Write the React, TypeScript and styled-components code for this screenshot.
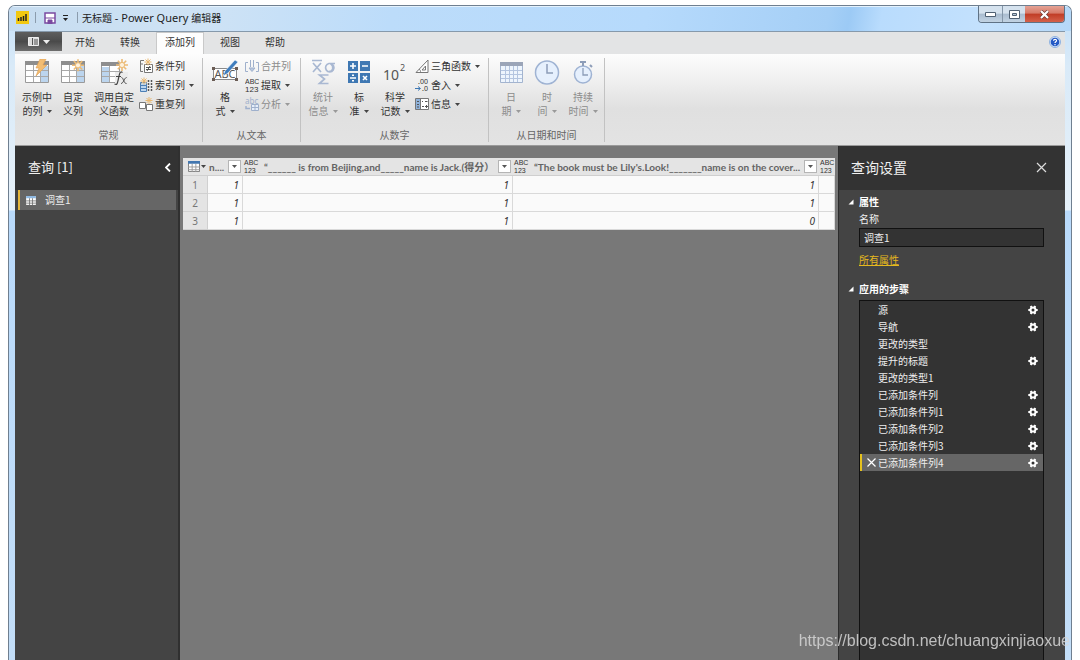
import React from "react";
import styled, { createGlobalStyle, css } from "styled-components";

const ui = `"Noto Sans", "Noto Sans CJK SC", sans-serif`;
const cjk = `"Noto Sans CJK SC", "Noto Sans", sans-serif`;

const Global = createGlobalStyle`
  * { box-sizing: border-box; }
  html, body { margin: 0; height: 100%; background: #fff; overflow: hidden; }
  body { font-family: ${cjk}; font-size: 10px; line-height: 14px; color: #333; }
  button { font: inherit; color: inherit; background: none; border: 0; padding: 0; margin: 0; }
  h2, h3, ul, ol { margin: 0; padding: 0; list-style: none; font-weight: 400; }
  svg { display: block; flex: none; }
`;

const Page = styled.div`
  height: 100vh;
  padding: 5px 8px 0 8px;
`;

const Shell = styled.div`
  height: 100%;
  display: flex;
  flex-direction: column;
  padding: 0 6px;
  border: 1px solid #6f7f90;
  border-bottom: 0;
  border-radius: 7px 7px 0 0;
  overflow: hidden;
  background: linear-gradient(180deg, #c4dff8 0, #d9eaf8 60px, #e6f1fa 204px, #b9dafb 205px, #c3def8 100%);
`;

const TitleBar = styled.header`
  display: flex;
  align-items: flex-start;
  justify-content: space-between;
  height: 25px;
  flex: none;
  margin: 0 -6px;
  padding: 0 6px 0 7px;
  box-shadow: inset 0 1px 0 #e4f2fd;
  background: linear-gradient(100deg, #c6dcf0 0%, #cfe3f5 18%, #bcdcfa 36%, #b6dafc 60%, #a5cff6 77%, #9ccaf5 79%, #b9dcfd 82%, #c4e1fd 92%, #b5d8f8 100%);
`;

const TitleLeft = styled.div`
  display: flex;
  align-items: center;
  height: 23px;
  color: #222;
`;

const Divider = styled.span`
  width: 1px;
  height: 11px;
  background: #8b9cad;
  margin: 0 8px 0 6px;
`;

const TitleText = styled.h1`
  margin: 0 0 0 -4px;
  font-size: 10px;
  font-weight: 400;
  line-height: 16px;
  white-space: pre;
`;

const AppName = styled.span`
  font-family: ${ui};
  font-size: 11px;
`;

const QuickButton = styled.button<{ $last?: boolean }>`
  display: flex;
  margin-right: ${(p) => (p.$last ? 3 : 7)}px;
`;

const WinButtons = styled.div`
  display: flex;
  height: 17px;
  border: 1px solid #5f7285;
  border-top: 0;
  border-radius: 0 0 4px 4px;
  overflow: hidden;
`;

const WinButton = styled.button<{ $close?: boolean }>`
  display: flex;
  align-items: center;
  justify-content: center;
  width: ${(p) => (p.$close ? 39 : 23)}px;
  border-left: ${(p) => (p.$close ? 0 : 1)}px solid #8496a8;
  background: linear-gradient(180deg, #d5e2ee 0 45%, #a9bccf 50%, #c2d3e3 100%);
  &:first-child { border-left: 0; }
  ${(p) =>
    p.$close &&
    css`
      background: linear-gradient(180deg, #e5a295 0, #d67a68 45%, #c03c25 50%, #d4614a 100%);
    `}
`;

const TabBar = styled.nav`
  display: flex;
  align-items: flex-start;
  gap: 1px;
  height: 23px;
  background: #e3e4e5;
  border-top: 1px solid #8699ab;
  flex: none;
`;

const FileButton = styled.button`
  display: flex;
  align-items: center;
  justify-content: center;
  gap: 4px;
  width: 47px;
  height: 19px;
  background: linear-gradient(180deg, #5e5e5e 0, #4a4a4a 50%, #6d6d6d 100%);
`;

const Tab = styled.button<{ $active?: boolean }>`
  height: 22px;
  padding: 0 12px 2px;
  color: #333;
  ${(p) =>
    p.$active &&
    css`
      margin: 0 3px;
      padding: 0 8px 3px;
      background: #fdfdfd;
      border: 1px solid #c9c9c9;
      border-bottom: 0;
    `}
`;

const HelpButton = styled.button`
  margin: 4px 4px 0 auto;
`;

const Ribbon = styled.section`
  display: flex;
  flex: none;
  height: 92px;
  padding: 4px 0 3px;
  background: linear-gradient(180deg, #fdfdfd 0, #f0f0f0 28%, #e0e0e0 60%, #e3e3e3 100%);
  border-bottom: 1px solid #9a9a9a;
`;

const Group = styled.div<{ $w: number }>`
  display: flex;
  flex-direction: column;
  justify-content: space-between;
  width: ${(p) => p.$w}px;
  flex: none;
  border-right: 1px solid #c2c2c2;
`;

const GroupBody = styled.div`
  display: flex;
  align-items: flex-start;
  padding-left: 4px;
`;

const GroupLabel = styled.div`
  text-align: center;
  color: #666;
`;

const BigButton = styled.button<{ $w?: number; $off?: boolean }>`
  display: flex;
  flex-direction: column;
  align-items: center;
  width: ${(p) => p.$w ?? 36}px;
  padding-top: 1px;
  white-space: nowrap;
  color: ${(p) => (p.$off ? "#8c8c8c" : "#333")};
`;

const BigIcon = styled.span`
  display: flex;
  align-items: center;
  justify-content: center;
  height: 27px;
  margin-bottom: 4px;
`;

const Line = styled.span`
  display: flex;
  align-items: center;
  gap: 4px;
`;

const SmallCol = styled.div`
  display: flex;
  flex-direction: column;
  margin-left: 2px;
  gap: 3px;
`;

const SmallButton = styled.button<{ $off?: boolean }>`
  display: flex;
  align-items: center;
  gap: 2px;
  height: 16px;
  white-space: nowrap;
  color: ${(p) => (p.$off ? "#8c8c8c" : "#333")};
`;

const Main = styled.main`
  display: flex;
  flex: 1;
  min-height: 0;
  background: #787878;
`;

const QueryPane = styled.aside`
  width: 165px;
  flex: none;
  background: #444;
  border-right: 2px solid #303030;
  color: #eee;
`;

const PaneHeader = styled.div<{ $right?: boolean }>`
  display: flex;
  align-items: center;
  justify-content: space-between;
  height: 44px;
  background: #333;
  color: #f0f0f0;
  padding: ${(p) => (p.$right ? "0 18px 2px 12px" : "0 7px 2px 13px")};
`;

const PaneTitle = styled.h2<{ $size: number }>`
  font-size: ${(p) => p.$size}px;
  line-height: 20px;
`;

const QueryItem = styled.button`
  display: flex;
  align-items: center;
  gap: 9px;
  width: 158px;
  height: 20px;
  margin: 0 0 0 3px;
  padding-left: 6px;
  background: #666;
  border-left: 2px solid #e6b73a;
`;

const Canvas = styled.section`
  flex: 1;
  min-width: 0;
  padding: 12px 3px 0 3px;
  overflow: hidden;
`;

const Table = styled.table`
  width: 100%;
  table-layout: fixed;
  border-collapse: separate;
  border-spacing: 0;
  background: #fafafa;
  font-family: Lato, "Noto Sans CJK SC", sans-serif;
`;

const Col = styled.col<{ $w?: number }>`
  width: ${(p) => (p.$w ? `${p.$w}px` : "auto")};
`;

const Th = styled.th`
  height: 18px;
  padding: 0;
  background: #e4e4e4;
  border-bottom: 1px solid #cfcfcf;
  font-size: 10px;
  color: #636363;
  text-align: left;
`;

const HeadCell = styled.div`
  display: flex;
  align-items: center;
  height: 17px;
  padding: 0 2px 0 1px;
  white-space: pre;
  overflow: hidden;
`;

const HeadText = styled.span`
  flex: 1;
  min-width: 0;
`;

const TableMenu = styled.button`
  display: flex;
  align-items: center;
  gap: 1px;
  padding-left: 4px;
`;

const TypeBadge = styled.span`
  display: flex;
  flex-direction: column;
  flex: none;
  width: 20px;
  font-family: "Liberation Sans", sans-serif;
  font-size: 7px;
  line-height: 8px;
  font-weight: 400;
  color: #333;
`;

const FilterButton = styled.button`
  display: flex;
  align-items: center;
  justify-content: center;
  flex: none;
  width: 13px;
  height: 13px;
  background: #fff;
  border: 1px solid #b5b5b5;
`;

const RowHead = styled.th`
  height: 18px;
  padding: 0;
  background: #e4e4e4;
  border-right: 1px solid #d0d0d0;
  border-bottom: 1px solid #d0d0d0;
  font-family: "Noto Sans", sans-serif;
  font-size: 10px;
  font-weight: 400;
  color: #777;
`;

const Td = styled.td`
  height: 18px;
  padding: 0 3px 0 0;
  border-right: 1px solid #d9d9d9;
  border-bottom: 1px solid #d9d9d9;
  font-family: "Noto Sans", sans-serif;
  font-size: 10px;
  line-height: 14px;
  font-style: italic;
  text-align: right;
  color: #333;
`;

const Settings = styled.aside`
  display: flex;
  flex-direction: column;
  width: 227px;
  flex: none;
  background: #444;
  border-left: 1px solid #2c2c2c;
  color: #eee;
`;

const SettingsBody = styled.div`
  display: flex;
  flex-direction: column;
  flex: 1;
  min-height: 0;
  padding: 4px 21px 0 20px;
`;

const SectionTitle = styled.h3`
  display: flex;
  align-items: center;
  gap: 5px;
  margin-left: -11px;
  font-size: 10px;
  font-weight: 700;
  line-height: 16px;
  color: #fff;
`;

const FieldLabel = styled.label`
  line-height: 18px;
`;

const NameInput = styled.input`
  width: 100%;
  height: 19px;
  padding: 0 4px;
  background: #333;
  border: 1px solid #111;
  border-radius: 0;
  outline: 0;
  color: #eee;
  font: inherit;
`;

const AllLink = styled.a`
  align-self: flex-start;
  margin: 6px 0 14px;
  color: #e6b91e;
  line-height: 14px;
`;

const StepList = styled.ol`
  flex: 1;
  margin-top: 3px;
  background: #333;
  border: 1px solid #111;
  border-bottom: 0;
`;

const Step = styled.li<{ $sel?: boolean }>`
  display: flex;
  align-items: center;
  height: 17px;
  padding: 0 5px 0 2px;
  border-left: 2px solid ${(p) => (p.$sel ? "#e6c21e" : "transparent")};
  background: ${(p) => (p.$sel ? "#666" : "transparent")};
`;

const StepMark = styled.button`
  display: flex;
  justify-content: center;
  width: 14px;
`;

const StepName = styled.button`
  flex: 1;
  text-align: left;
`;

const Watermark = styled.div`
  position: fixed;
  right: 10px;
  bottom: 10px;
  font: 16px/18px "Liberation Sans", sans-serif;
  color: rgba(215, 215, 215, 0.85);
`;

const Caret = ({ color = "#444" }: { color?: string }) => (
  <svg width="5" height="3" viewBox="0 0 5 3">
    <path d="M0 0h5L2.5 3z" fill={color} />
  </svg>
);

const Spark = ({ x, y }: { x: number; y: number }) => (
  <g transform={`translate(${x} ${y})`} stroke="#ecbb76" strokeWidth="1.6">
    <path d="M0-6V6M-6 0H6M-4.2-4.2L4.2 4.2M-4.2 4.2L4.2-4.2" />
    <circle r="2.6" fill="#fdf1dc" strokeWidth="1" />
  </g>
);

const Grid = () => (
  <g>
    <path d="M1.5 2.5h23v21h-23z" fill="#fff" stroke="#9a9a9a" />
    <path d="M1 2h24v4H1z" fill="#8e8e8e" />
    <path d="M17 7h7v16h-7z" fill="#bcd5ee" />
    <path d="M2 11.5h22M2 17.5h22M9.5 6v17M16.5 6v17" stroke="#a9a9a9" fill="none" />
  </g>
);

const IconExample = () => (
  <svg width="26" height="27" viewBox="0 0 26 27">
    <Grid />
    <path d="M16 0h6l-3 6h4L12 17l3-8h-3z" fill="#f2bd73" stroke="#e0a050" strokeWidth=".6" />
  </svg>
);
const IconCustom = () => (
  <svg width="26" height="27" viewBox="0 0 26 27">
    <Grid />
    <Spark x={18} y={6.3} />
  </svg>
);
const IconInvoke = () => (
  <svg width="28" height="29" viewBox="0 0 28 29">
    <path d="M1.5 4.500h18v20h-18z" fill="#fff" stroke="#9a9a9a" />
    <path d="M1 4h18v4H1z" fill="#8e8e8e" />
    <path d="M2 9h7v15H2z" fill="#bcd5ee" />
    <path d="M2 13.500h17M2 18.500h17M9.500 8v16" stroke="#a9a9a9" />
    <path d="M15 14h13v14H15z" fill="#ececec" />
    <Spark x={22} y={7} />
    <path d="M22.500 14.500c-3-2-3 2-4 6s-1 7-4 5.500M16 18.500h5" stroke="#444" fill="none" strokeWidth="1.200" />
    <path d="M21.500 19.500c2 0 2 6 5 6M26.500 19.500c-2 0-3 6-5.500 6" stroke="#444" fill="none" />
  </svg>
);
const IconFormat = () => (
  <svg width="28" height="27" viewBox="0 0 28 27">
    <path d="M2.500 9.500h23v11h-23z" fill="#fff" stroke="#8a8a8a" />
    <path d="M1 8h3v3H1zM24 8h3v3h-3zM1 19h3v3H1zM24 19h3v3h-3z" fill="#6b5d55" />
    <text x="14" y="19" textAnchor="middle" fontFamily="Noto Sans" fontSize="11" fill="#555">ABC</text>
    <path d="M24 1l3 2-10 11-5 3 2-5z" fill="#3f7dbd" stroke="#fff" strokeWidth=".5" />
  </svg>
);
const IconStats = () => (
  <svg width="26" height="27" viewBox="0 0 26 27" fill="none" stroke="#a9b8d2" strokeWidth="1.700">
    <path d="M2 1.500h10M3 4l8 9M11 4l-8 9" />
    <path d="M25 4.500h-6a4.200 4.200 0 1 0 1.500 0c4 3 2.500 8-1.500 8" />
    <path d="M18.500 16h-9l5 4-5 4.500h9" />
  </svg>
);
const IconStandard = () => (
  <svg width="24" height="27" viewBox="0 0 24 27">
    <path d="M1 2h10v10H1zM13 2h10v10H13zM1 14h10v10H1zM13 14h10v10H13z" fill="#3f78b3" />
    <path d="M3 7h6M6 4v6M15 7h6M3 19h6M16 17l4 4M20 17l-4 4" stroke="#fff" strokeWidth="1.600" />
    <path d="M5 15.500h2v1.500H5zM5 21h2v1.500H5z" fill="#fff" />
  </svg>
);
const IconSci = () => (
  <svg width="26" height="27" viewBox="0 0 26 27" fontFamily="Noto Sans" fill="#555">
    <text x="1" y="21" fontSize="14">10</text>
    <text x="18" y="12" fontSize="9">2</text>
  </svg>
);
const IconDate = () => (
  <svg width="24" height="27" viewBox="0 0 24 27">
    <path d="M1.500 3.500h22v20h-22z" fill="#eef5fd" stroke="#a3b4cf" />
    <path d="M1 3h23v4H1z" fill="#9ba5b8" />
    <path d="M2 11.500h21M2 15.500h21M2 19.500h21M6.500 7v16M10.500 7v16M14.500 7v16M18.500 7v16" stroke="#b4c5e0" />
  </svg>
);
const IconTime = () => (
  <svg width="26" height="27" viewBox="0 0 26 27" fill="none" stroke="#9fb3d3">
    <circle cx="13" cy="13.500" r="11.500" fill="#e6f0fd" strokeWidth="1.500" />
    <path d="M13 5v9h6" stroke="#8d9db8" strokeWidth="1.500" />
  </svg>
);
const IconDuration = () => (
  <svg width="22" height="27" viewBox="0 0 22 27" fill="none" stroke="#9fb3d3">
    <circle cx="11" cy="15.500" r="8.500" fill="#e6f0fd" strokeWidth="1.500" />
    <path d="M8 3h6M11 3v4M18 6l2 2" stroke="#8d9db8" strokeWidth="2" />
    <path d="M11 9v7h5" stroke="#8d9db8" strokeWidth="1.300" />
  </svg>
);

const Small = ({ children }: { children: React.ReactNode }) => (
  <svg width="14" height="16" viewBox="0 0 14 16" fill="none">
    {children}
  </svg>
);
const MiniSpark = ({ x, y }: { x: number; y: number }) => (
  <path
    transform={`translate(${x} ${y})`}
    d="M0-3.500v7M-3.500 0h7M-2.500-2.500l5 5M-2.500 2.500l5-5"
    stroke="#e9b871"
  />
);
const IconCond = () => (
  <Small>
    <path d="M5 2.500H1.500v11H4M1.500 6H4" stroke="#777" />
    <path d="M5.500 6.500h8v8h-8z" fill="#fff" stroke="#777" />
    <path d="M7 9.500h5M7 11.500h5M11 8l-3 5" stroke="#555" />
    <MiniSpark x={9} y={4} />
  </Small>
);
const IconIndex = () => (
  <Small>
    <path d="M1.500 5.500h6v9h-6z" fill="#bcd5ee" stroke="#4c7fb5" />
    <path d="M2 8.500h5M2 11.500h5" stroke="#4c7fb5" />
    <path d="M9.500 3v12M12.500 3v12" stroke="#555" strokeWidth="1.500" strokeDasharray="2 1" />
    <MiniSpark x={5} y={4} />
  </Small>
);
const IconDup = () => (
  <Small>
    <path d="M.5 6.500h6v6h-6zM7.500 8.500h6v6h-6z" fill="#fff" stroke="#777" />
    <MiniSpark x={10} y={4.500} />
  </Small>
);
const IconMerge = () => (
  <Small>
    <path d="M3 4.500H.500v9H3M11 4.500h2.500v9H11" stroke="#9fb0cc" />
    <path d="M5.500 2v7M8.500 2v7M4 10l3 3.500 3-3.500z" stroke="#9fb0cc" fill="#b9c8e0" />
  </Small>
);
const IconExtract = () => (
  <svg width="14" height="16" viewBox="0 0 14 16" fontFamily="Liberation Sans" fill="#333">
    <text x="0" y="7" fontSize="7">ABC</text>
    <text x="0" y="15" fontSize="8">123</text>
  </svg>
);
const IconParse = () => (
  <Small>
    <text x="0" y="8" fontFamily="Noto Sans" fontSize="8" fill="#9fb0cc">abc</text>
    <path d="M6.500 8.500h7v6h-7zM6.500 11.500h7M10 8.500v6" stroke="#9fb0cc" fill="#e6eefa" />
    <path d="M1 10v2.500h4" stroke="#9fb0cc" strokeWidth="1.500" />
  </Small>
);
const IconTrig = () => (
  <Small>
    <path d="M1 14.500h12V2z" fill="#fff" stroke="#777" />
    <path d="M7 12h3.500V8z" stroke="#777" />
    <path d="M4 11c1.500 1 1.500 2 1.500 3.500" stroke="#777" />
  </Small>
);
const IconRound = () => (
  <svg width="14" height="16" viewBox="0 0 14 16" fontFamily="Noto Sans" fontSize="7" fill="#333">
    <text x="3" y="7">.00</text>
    <text x="7" y="14">.0</text>
    <path d="M0 11.500h5M3 9.500l2.500 2-2.500 2" stroke="#3f78b3" fill="none" />
  </svg>
);
const IconInfo = () => (
  <Small>
    <path d="M.5 2.500h13v11H.500z" fill="#fff" stroke="#777" />
    <path d="M1 3h4v10H1z" fill="#8fb2da" />
    <path d="M5.500 3v10" stroke="#777" />
    <path d="M2 5.500h2M2 8.500h2M2 11h2M7 5.500h1M10 5.500h2.500M7 10.500h2M10 10.500h3M11.500 9v3" stroke="#555" />
  </Small>
);

const Gear = () => (
  <svg width="10" height="10" viewBox="0 0 10 10" stroke="#fff" fill="none">
    <path d="M.3 5h9.400M2.700 1l4.600 8M7.300 1L2.700 9" strokeWidth="2" />
    <circle cx="5" cy="5" r="2.500" fill="#333" strokeWidth="2" />
  </svg>
);
const MiniTable = ({ large }: { large?: boolean }) => (
  <svg width={large ? 12 : 10} height={large ? 11 : 9} viewBox="0 0 13 12">
    <path d="M.5.5h12v11H.500z" fill="#fff" stroke={large ? "#777" : "#fff"} />
    <path d="M0 0h13v3H0z" fill={large ? "#4277b0" : "#8fb9e2"} />
    <path d="M0 6.500h13M0 9.500h13M4.500 3v9M8.500 3v9" stroke={large ? "#999" : "#666"} />
  </svg>
);

const Filter = ({ label }: { label: string }) => (
  <FilterButton aria-label={label}>
    <Caret color="#555" />
  </FilterButton>
);

const Badge = () => (
  <TypeBadge>
    <span>ABC</span>
    <span>123</span>
  </TypeBadge>
);

const Collapse = () => (
  <svg width="6" height="6" viewBox="0 0 6 6">
    <path d="M5.500.5v5h-5z" fill="#fff" />
  </svg>
);

type BigProps = { icon: React.ReactNode; a: string; b: string; drop?: boolean; off?: boolean; w?: number };
const Big = ({ icon, a, b, drop, off, w }: BigProps) => (
  <BigButton $w={w} $off={off}>
    <BigIcon>{icon}</BigIcon>
    <Line>{a}</Line>
    <Line>
      {b}
      {drop && <Caret color={off ? "#999" : "#444"} />}
    </Line>
  </BigButton>
);

type SmallProps = { icon: React.ReactNode; t: string; drop?: boolean; off?: boolean };
const SmallItem = ({ icon, t, drop, off }: SmallProps) => (
  <SmallButton $off={off}>
    {icon}
    <Line>
      {t}
      {drop && <Caret color={off ? "#999" : "#444"} />}
    </Line>
  </SmallButton>
);

const steps: { name: string; gear: boolean }[] = [
  { name: "源", gear: true },
  { name: "导航", gear: true },
  { name: "更改的类型", gear: false },
  { name: "提升的标题", gear: true },
  { name: "更改的类型1", gear: false },
  { name: "已添加条件列", gear: true },
  { name: "已添加条件列1", gear: true },
  { name: "已添加条件列2", gear: true },
  { name: "已添加条件列3", gear: true },
  { name: "已添加条件列4", gear: true },
];

const rows = [
  [1, 1, 1],
  [1, 1, 1],
  [1, 1, 0],
];

export default function App() {
  return (
    <Page lang="zh-CN">
      <Global />
      <Shell>
        <TitleBar>
          <TitleLeft>
            <svg width="13" height="13" viewBox="0 0 13 13">
              <path d="M0 0h13v13H0z" fill="#f2c811" />
              <path d="M2.500 7v3M5 6v4M7.500 5v5M10 3v7" stroke="#222" strokeWidth="1.500" />
            </svg>
            <Divider />
            <QuickButton aria-label="保存">
              <svg width="12" height="12" viewBox="0 0 12 12">
                <path d="M1 1h10v10H1z" fill="#fff" stroke="#7a4aa0" strokeWidth="1.500" />
                <path d="M1 6h10M4 8h4v4H4z" stroke="#7a4aa0" fill="#7a4aa0" />
              </svg>
            </QuickButton>
            <QuickButton $last aria-label="自定义快速访问工具栏">
              <svg width="5" height="6" viewBox="0 0 5 6">
                <path d="M0 .5h5" stroke="#222" />
                <path d="M0 3h5L2.500 6z" fill="#222" />
              </svg>
            </QuickButton>
            <Divider />
            <TitleText>
              无标题<AppName>{" - Power Query "}</AppName>编辑器
            </TitleText>
          </TitleLeft>
          <WinButtons>
            <WinButton aria-label="最小化">
              <svg width="11" height="5" viewBox="0 0 11 5">
                <path d="M.5.5h10v4H.500z" fill="#fff" stroke="#4f6072" />
              </svg>
            </WinButton>
            <WinButton aria-label="最大化">
              <svg width="11" height="9" viewBox="0 0 11 9">
                <path d="M.5.5h10v8H.500z" fill="#fff" stroke="#4f6072" />
                <path d="M3.500 3.500h4v2h-4z" fill="#b8c8d8" stroke="#4f6072" />
              </svg>
            </WinButton>
            <WinButton $close aria-label="关闭">
              <svg width="11" height="9" viewBox="0 0 11 9">
                <path d="M2 1l7 7M9 1L2 8" stroke="#6b3a34" strokeWidth="3.500" />
                <path d="M2 1l7 7M9 1L2 8" stroke="#fff" strokeWidth="2.200" />
              </svg>
            </WinButton>
          </WinButtons>
        </TitleBar>

        <TabBar>
          <FileButton aria-label="文件">
            <svg width="11" height="9" viewBox="0 0 11 9">
              <path d="M.5.5h10v8H.500z" fill="#ddd" stroke="#eee" />
              <path d="M4.500 1v7M6 3h4M6 5h4M6 7h4" stroke="#555" />
            </svg>
            <svg width="7" height="4" viewBox="0 0 7 4">
              <path d="M0 0h7L3.500 4z" fill="#eee" />
            </svg>
          </FileButton>
          <Tab>开始</Tab>
          <Tab>转换</Tab>
          <Tab $active>添加列</Tab>
          <Tab>视图</Tab>
          <Tab>帮助</Tab>
          <HelpButton aria-label="帮助">
            <svg width="12" height="12" viewBox="0 0 12 12">
              <circle cx="6" cy="6" r="5.500" fill="#d5e4f8" stroke="#8fb2e0" />
              <circle cx="6" cy="6" r="4.300" fill="#2459c5" />
              <path d="M4.500 4.800c0-2 3.200-2 3 0-.1 1-1.500 1-1.500 2.200M6 8v1.200" stroke="#fff" fill="none" strokeWidth="1.200" />
            </svg>
          </HelpButton>
        </TabBar>

        <Ribbon>
          <Group $w={188}>
            <GroupBody>
              <Big icon={<IconExample />} a="示例中" b="的列" drop />
              <Big icon={<IconCustom />} a="自定" b="义列" />
              <Big icon={<IconInvoke />} a="调用自定" b="义函数" w={46} />
              <SmallCol>
                <SmallItem icon={<IconCond />} t="条件列" />
                <SmallItem icon={<IconIndex />} t="索引列" drop />
                <SmallItem icon={<IconDup />} t="重复列" />
              </SmallCol>
            </GroupBody>
            <GroupLabel>常规</GroupLabel>
          </Group>
          <Group $w={98}>
            <GroupBody>
              <Big icon={<IconFormat />} a="格" b="式" drop />
              <SmallCol>
                <SmallItem icon={<IconMerge />} t="合并列" off />
                <SmallItem icon={<IconExtract />} t="提取" drop />
                <SmallItem icon={<IconParse />} t="分析" drop off />
              </SmallCol>
            </GroupBody>
            <GroupLabel>从文本</GroupLabel>
          </Group>
          <Group $w={188}>
            <GroupBody>
              <Big icon={<IconStats />} a="统计" b="信息" drop off />
              <Big icon={<IconStandard />} a="标" b="准" drop />
              <Big icon={<IconSci />} a="科学" b="记数" drop />
              <SmallCol>
                <SmallItem icon={<IconTrig />} t="三角函数" drop />
                <SmallItem icon={<IconRound />} t="舍入" drop />
                <SmallItem icon={<IconInfo />} t="信息" drop />
              </SmallCol>
            </GroupBody>
            <GroupLabel>从数字</GroupLabel>
          </Group>
          <Group $w={116}>
            <GroupBody>
              <Big icon={<IconDate />} a="日" b="期" drop off />
              <Big icon={<IconTime />} a="时" b="间" drop off />
              <Big icon={<IconDuration />} a="持续" b="时间" drop off />
            </GroupBody>
            <GroupLabel>从日期和时间</GroupLabel>
          </Group>
        </Ribbon>

        <Main>
          <QueryPane>
            <PaneHeader>
              <PaneTitle $size={13}>查询 [1]</PaneTitle>
              <button aria-label="折叠">
                <svg width="6" height="9" viewBox="0 0 6 9">
                  <path d="M5 .5L1 4.500l4 4" stroke="#fff" fill="none" strokeWidth="1.800" />
                </svg>
              </button>
            </PaneHeader>
            <QueryItem>
              <MiniTable />
              调查1
            </QueryItem>
          </QueryPane>

          <Canvas>
            <Table>
              <colgroup>
                <Col $w={25} />
                <Col $w={35} />
                <Col $w={270} />
                <Col />
                <Col $w={16} />
              </colgroup>
              <thead>
                <tr>
                  <Th>
                    <HeadCell>
                      <TableMenu aria-label="表选项">
                        <MiniTable large />
                        <Caret />
                      </TableMenu>
                    </HeadCell>
                  </Th>
                  <Th>
                    <HeadCell>
                      <HeadText>n....</HeadText>
                      <Filter label="筛选第1列" />
                    </HeadCell>
                  </Th>
                  <Th>
                    <HeadCell>
                      <Badge />
                      <HeadText>{"“______ is from Beijing,and_____name is Jack.(得分）"}</HeadText>
                      <Filter label="筛选第2列" />
                    </HeadCell>
                  </Th>
                  <Th>
                    <HeadCell>
                      <Badge />
                      <HeadText>{"“The book must be Lily's.Look!_______name is on the cover..."}</HeadText>
                      <Filter label="筛选第3列" />
                    </HeadCell>
                  </Th>
                  <Th>
                    <HeadCell>
                      <Badge />
                    </HeadCell>
                  </Th>
                </tr>
              </thead>
              <tbody>
                {rows.map((r, i) => (
                  <tr key={i}>
                    <RowHead scope="row">{i + 1}</RowHead>
                    {r.map((v, j) => (
                      <Td key={j}>{v}</Td>
                    ))}
                    <Td />
                  </tr>
                ))}
              </tbody>
            </Table>
          </Canvas>

          <Settings>
            <PaneHeader $right>
              <PaneTitle $size={14}>查询设置</PaneTitle>
              <button aria-label="关闭设置">
                <svg width="11" height="11" viewBox="0 0 11 11">
                  <path d="M1 1l9 9M10 1l-9 9" stroke="#ddd" strokeWidth="1.200" />
                </svg>
              </button>
            </PaneHeader>
            <SettingsBody>
              <SectionTitle>
                <Collapse />
                属性
              </SectionTitle>
              <FieldLabel htmlFor="query-name">名称</FieldLabel>
              <NameInput id="query-name" defaultValue="调查1" />
              <AllLink href="#all">所有属性</AllLink>
              <SectionTitle>
                <Collapse />
                应用的步骤
              </SectionTitle>
              <StepList>
                {steps.map((s, i) => {
                  const sel = i === steps.length - 1;
                  return (
                    <Step key={s.name} $sel={sel}>
                      {sel ? (
                        <StepMark aria-label="删除">
                          <svg width="9" height="9" viewBox="0 0 9 9">
                            <path d="M.5.5l8 8M8.500.5l-8 8" stroke="#fff" strokeWidth="1.200" />
                          </svg>
                        </StepMark>
                      ) : (
                        <StepMark as="span" />
                      )}
                      <StepName>{s.name}</StepName>
                      {s.gear && (
                        <button aria-label="设置">
                          <Gear />
                        </button>
                      )}
                    </Step>
                  );
                })}
              </StepList>
            </SettingsBody>
          </Settings>
        </Main>
      </Shell>
      <Watermark>https://blog.csdn.net/chuangxinjiaoxue</Watermark>
    </Page>
  );
}
